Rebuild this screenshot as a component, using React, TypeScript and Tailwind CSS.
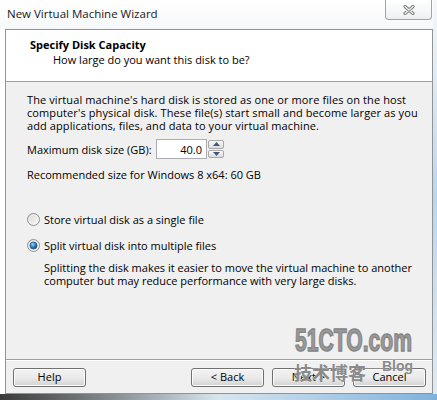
import React from "react";

const FONT = "font-['Open_Sans','Noto_Sans',sans-serif]";

function Radio({ checked }: { checked?: boolean }) {
  return (
    <svg width="13" height="13" viewBox="0 0 13 13" className="shrink-0">
      <defs>
        <linearGradient id={checked ? "rg1" : "rg0"} x1="0" y1="0" x2="1" y2="1">
          <stop offset="0" stopColor="#d4d4d4" />
          <stop offset="1" stopColor="#fbfbfb" />
        </linearGradient>
        <radialGradient id="dot" cx="0.4" cy="0.35" r="0.7">
          <stop offset="0" stopColor="#9fd6f8" />
          <stop offset="0.5" stopColor="#2f84c4" />
          <stop offset="1" stopColor="#0d3f6c" />
        </radialGradient>
      </defs>
      <circle cx="6.5" cy="6.5" r="6" fill={`url(#${checked ? "rg1" : "rg0"})`} stroke="#8e8f8f" />
      <circle cx="6.5" cy="6.5" r="4.6" fill="none" stroke="#f4f4f4" strokeWidth="0.8" />
      {checked && <circle cx="6.5" cy="6.5" r="3.6" fill="url(#dot)" stroke="#1b4f7c" strokeWidth="0.6" />}
    </svg>
  );
}

function WinButton({ children }: { children?: React.ReactNode }) {
  return (
    <div className="w-[73px] h-[19px] rounded-[3px] border border-[#707070] bg-linear-to-b from-[#f2f2f2] via-[#ebebeb] to-[#d3d3d3] shadow-[inset_0_0_0_1px_#fcfcfc] flex items-center justify-center text-[11px] text-black">
      {children}
    </div>
  );
}

export default function App() {
  return (
    <div className={`relative w-[437px] h-[400px] overflow-hidden bg-white flex flex-col ${FONT}`}>
      <div className="flex flex-1">
        <div className="flex flex-col w-[433px]">
          {/* Title bar */}
          <div className="h-[29px] flex justify-between items-start bg-linear-to-b from-white to-[#f7f8fa]">
            <span className="pl-[7px] pt-[6px] text-[11.5px] leading-[16px] text-[#1a1a1a]">New Virtual Machine Wizard</span>
            <div className="mr-[1px] w-[47px] h-[20px] rounded-b-[4px] border border-t-0 border-[#a3a3a3] bg-linear-to-b from-white to-[#eef0f2] flex items-center justify-center">
              <svg width="12" height="10" viewBox="0 0 12 10">
                <path d="M2 1.5 L10 8.5 M10 1.5 L2 8.5" stroke="#7a7a7a" strokeWidth="3.2" strokeLinecap="round" />
                <path d="M2 1.5 L10 8.5 M10 1.5 L2 8.5" stroke="#f4f4f4" strokeWidth="1.3" strokeLinecap="round" />
              </svg>
            </div>
          </div>

          {/* Wizard window */}
          <div className="ml-[5px] flex-1 flex flex-col border border-[#939393] text-black">
            <div className="h-[52px] bg-white border-b border-[#a0a0a0] pt-[7px] text-[11px] leading-[15px]">
              <div className="pl-[24px] font-bold">Specify Disk Capacity</div>
              <div className="pl-[47px]">How large do you want this disk to be?</div>
            </div>

            <div className="flex-1 bg-[#f0f0f0] pl-[21px] pt-[11px] text-[11px] leading-[13px] flex flex-col">
              <p className="tracking-[0.1px]">
                The virtual machine's hard disk is stored as one or more files on the host
                <br />
                computer's physical disk. These file(s) start small and become larger as you
                <br />
                add applications, files, and data to your virtual machine.
              </p>

              <div className="mt-[7px] flex items-center h-[20px]">
                <span className="w-[129px]">Maximum disk size (GB):</span>
                <div className="w-[51px] h-[20px] bg-white border border-[#abadb3] flex items-center justify-end pr-[4px]">40.0</div>
                <div className="ml-[1px] w-[16px] h-[18px] flex flex-col gap-px">
                  <div className="flex-1 rounded-[2px] border border-[#a9a9a9] bg-linear-to-b from-[#fafafa] to-[#dcdcdc] flex items-center justify-center">
                    <svg width="7" height="4" viewBox="0 0 7 4"><path d="M0 4 L3.5 0 L7 4 Z" fill="#3c5a80" /></svg>
                  </div>
                  <div className="flex-1 rounded-[2px] border border-[#a9a9a9] bg-linear-to-b from-[#fafafa] to-[#dcdcdc] flex items-center justify-center">
                    <svg width="7" height="4" viewBox="0 0 7 4"><path d="M0 0 L3.5 4 L7 0 Z" fill="#3c5a80" /></svg>
                  </div>
                </div>
              </div>

              <p className="mt-[9px]">Recommended size for Windows 8 x64: 60 GB</p>

              <label className="mt-[32px] flex items-center gap-[4px] h-[13px]">
                <Radio />
                <span>Store virtual disk as a single file</span>
              </label>
              <label className="mt-[13px] flex items-center gap-[4px] h-[13px]">
                <Radio checked />
                <span>Split virtual disk into multiple files</span>
              </label>
              <p className="mt-[9px] ml-[17px]">
                Splitting the disk makes it easier to move the virtual machine to another
                <br />
                computer but may reduce performance with very large disks.
              </p>
            </div>

            <div className="bg-[#f0f0f0] border-t border-[#a0a0a0] shadow-[inset_0_1px_0_#ffffff] pt-[8px] pb-[6px] pl-[7px] pr-[6px] flex items-center">
              <WinButton>Help</WinButton>
              <div className="flex-1" />
              <div className="flex gap-[8px]">
                <WinButton>&lt; Back</WinButton>
                <WinButton>Next &gt;</WinButton>
                <WinButton>Cancel</WinButton>
              </div>
            </div>
          </div>
        </div>
        {/* desktop edge on the right */}
        <div className="w-[4px] bg-linear-to-b from-[#f4f8fb] via-[#b9d7ef] to-[#dcebf6]" />
      </div>
      {/* desktop edge at the bottom */}
      <div className="h-[6px] bg-linear-to-r from-[#3a3a3a] via-[#d7e6ee] to-[#7fb2dc]" />

      {/* watermark */}
      <div className="absolute left-[295px] top-[322px] w-[140px] pointer-events-none select-none">
        <div className="origin-left scale-x-[0.66] font-['Liberation_Sans',sans-serif] font-bold text-[32px] leading-[36px] text-[#9a9a9a] [-webkit-text-stroke:1.5px_#858585] [text-shadow:0_0_1px_#ffffff]">
          51CTO.com
        </div>
      </div>
      <div className="absolute left-[294px] top-[360px] flex items-start pointer-events-none select-none">
        <span className="font-['Noto_Sans_CJK_SC',sans-serif] font-bold text-[18px] leading-[24px] text-[#8a8a8a] [text-shadow:0_0_1px_#ffffff]">技术博客</span>
        <span className="mt-[8px] w-[16px] h-[1px] bg-[#8a8a8a]" />
        <span className="font-['Liberation_Sans',sans-serif] font-bold text-[14px] leading-[13px] text-[#8a8a8a] [text-shadow:0_0_1px_#ffffff]">Blog</span>
      </div>
    </div>
  );
}
